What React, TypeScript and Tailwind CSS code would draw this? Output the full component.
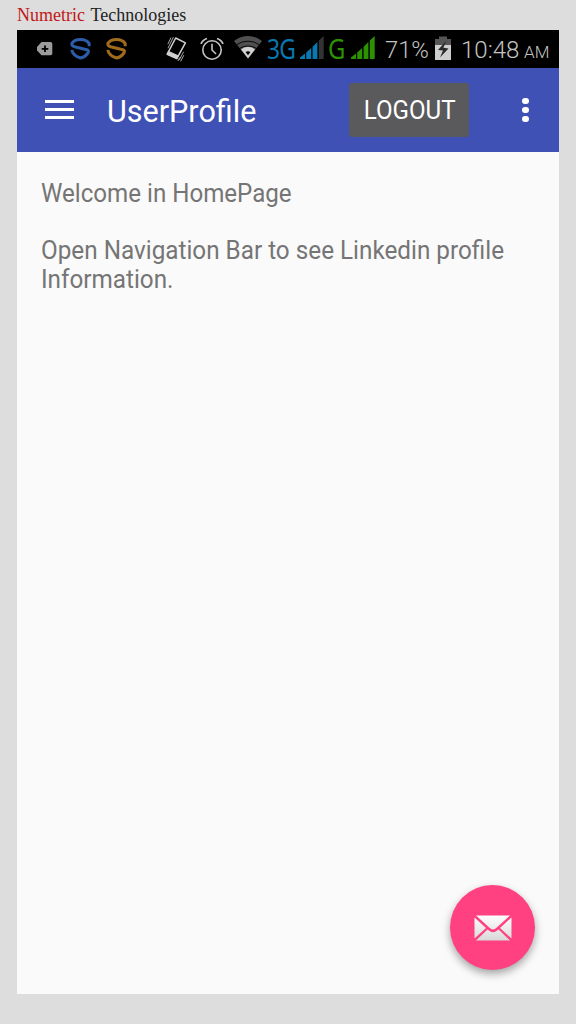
import React from 'react';

function TagIcon() {
  return (
    <svg className="ml-5 h-[38px] w-4 shrink-0" viewBox="37 30 16 38">
      <path d="M41.5 42H50.5Q52.3 42 52.3 44V53.5Q52.3 55.3 50.5 55.3H41.5L37 50.5V47Z" fill="#9b9b9b" />
      <path d="M45 45.5V52M41.7 48.8H48.3" stroke="#000" strokeWidth="1.8" />
    </svg>
  );
}

function SIcon({ color, className }: { color: string; className: string }) {
  return (
    <svg className={`h-[38px] w-[22px] shrink-0 ${className}`} viewBox="0 30 22 38" fill="none" stroke={color} strokeWidth="3">
      <path d="M19.2 46.2V43.6Q16.5 39.6 10.5 39.6Q4.5 39.6 1.9 43.3V44.4Q2 46.1 4.5 46.7L16.8 49.7Q19.4 50.5 18 52.9Q15.5 56.8 10.7 58Q5.5 56.8 3 53Q2.1 51.6 1.9 49.8" />
    </svg>
  );
}

function VibrateIcon() {
  return (
    <svg className="ml-[37px] h-[38px] w-[23px] shrink-0" viewBox="165 30 23 38" fill="none" stroke="#d0d0d0">
      <path d="M175.7 38L185.4 42.8L176.8 58.6L167.2 54.2Z" strokeWidth="1.5" strokeLinejoin="round" />
      <path d="M167.2 54.2L176.8 58.6L178.3 55.8L168.6 51.4Z" fill="#d0d0d0" />
      <path d="M168 48.2L173.4 37.2M167.8 44.2L171 37.6M179.3 60L183.6 51.8M177.8 61L179.8 57.3M180.6 61.4L183.8 55.2" strokeWidth="0.8" />
    </svg>
  );
}

function AlarmIcon() {
  return (
    <svg className="ml-3 h-[38px] w-6 shrink-0" viewBox="200 30 24 38" fill="none" stroke="#c4c4c4">
      <circle cx="212" cy="50" r="9.2" strokeWidth="1.6" />
      <path d="M212 43.8V50L216 54" strokeWidth="1.6" />
      <path d="M201 43.8Q202.5 40 207 38.5M217 38.5Q221.5 40 223 43.8" strokeWidth="1.8" />
    </svg>
  );
}

function WifiIcon() {
  return (
    <svg className="ml-[10px] h-[38px] w-7 shrink-0" viewBox="234 30 28 38" fill="none">
      <path d="M248 58.5L234 41Q240.5 36 248 36T262 41Z" fill="#505050" />
      <path d="M248 58.5L241 49.5Q244 46.8 248 46.8T255 49.5Z" fill="#d2d2d2" />
      <path d="M236.8 44.6Q241.5 41.2 248 41.2T259.2 44.6M240 48.2Q243 46 248 46T256 48.2" stroke="#000" strokeWidth="0.9" />
      <path d="M245.6 52.1Q248 50.6 250.4 52.1L248 55.2Z" fill="#000" />
    </svg>
  );
}

function SignalIcon({ color, last, className }: { color: string; last: string; className: string }) {
  return (
    <svg className={`h-[38px] w-6 shrink-0 ${className}`} viewBox="0 30 24 38" fill={color}>
      <path d="M0 59V57.5L5 53.5V59Z" />
      <path d="M6.2 59V52.5L11.2 48V59Z" />
      <path d="M12.6 59V46.7L17.4 42V59Z" />
      <path d="M18.8 59V40.6L23.7 36V59Z" fill={last} />
    </svg>
  );
}

function BatteryIcon() {
  return (
    <svg className="ml-[6px] h-[38px] w-4 shrink-0" viewBox="435 30 16 38">
      <path d="M435 39H439V36.5H447V39H451V46H435Z" fill="#555" />
      <path d="M435 45H451V60H435Z" fill="#cecece" />
      <path d="M446.2 40.8L438 50L443 50.6L440 57.4L448.5 48.4L443.4 47.7Z" fill="#292929" />
    </svg>
  );
}

function StatusBar() {
  return (
    <div className="flex h-[38px] items-start bg-black font-['Roboto',sans-serif] leading-[38px] whitespace-nowrap text-[#c4c4c4]">
      <TagIcon />
      <SIcon color="#2c5da8" className="ml-[17px]" />
      <SIcon color="#a16b1c" className="ml-[14px]" />
      <VibrateIcon />
      <AlarmIcon />
      <WifiIcon />
      <span className="ml-[5px] w-[29px] shrink-0 origin-left scale-x-[0.86] pt-px font-['Noto_Sans',sans-serif] text-[26.5px] leading-[36px] tracking-[-1px] text-[#0878b0]">3G</span>
      <SignalIcon color="#0878b0" last="#333" className="ml-1" />
      <span className="ml-1 w-[18px] shrink-0 origin-left scale-x-[0.9] pt-px font-['Noto_Sans',sans-serif] text-[26.5px] leading-[36px] text-[#2c9200]">G</span>
      <SignalIcon color="#2c9200" last="#2c9200" className="ml-[5px]" />
      <span className="ml-[10px] w-11 shrink-0 origin-left scale-x-[0.97] pt-px text-[24.5px] font-light">71%</span>
      <BatteryIcon />
      <span className="ml-[10px] w-[62px] shrink-0 origin-left scale-x-[0.98] pt-px text-[24.5px] font-light">10:48</span>
      <span className="ml-px shrink-0 pt-[3px] text-[17px] font-light">AM</span>
    </div>
  );
}

function AppBar() {
  return (
    <header className="flex h-[84px] items-center bg-[#3f51b5] font-['Roboto',sans-serif] text-white">
      <button className="ml-7 flex w-[29px] -translate-y-px flex-col gap-[5px]" aria-label="Menu">
        <span className="h-[3px] w-full bg-white" />
        <span className="h-[3px] w-full bg-white" />
        <span className="h-[3px] w-full bg-white" />
      </button>
      <h1 className="ml-[33px] w-[242px] origin-left scale-x-[0.985] pt-[3px] text-[31px] leading-9 whitespace-nowrap">UserProfile</h1>
      <button className="flex h-[54px] w-[120px] items-center justify-center rounded-[3px] bg-[#5a595b] pt-0.5 pl-0.5 text-[25px] whitespace-nowrap">
        <span className="scale-x-[0.965]">LOGOUT</span>
      </button>
      <button className="ml-[53px] flex w-[7px] flex-col gap-[2.5px]" aria-label="More options">
        <span className="size-[6.5px] rounded-full bg-white" />
        <span className="size-[6.5px] rounded-full bg-white" />
        <span className="size-[6.5px] rounded-full bg-white" />
      </button>
    </header>
  );
}

export default function App() {
  return (
    <div className="flex h-[1024px] w-[576px] flex-col bg-[#dddddd] pl-[17px]">
      <div className="h-[30px] font-['Liberation_Serif',serif] text-[18px] leading-[31px] whitespace-nowrap text-[#222]">
        <span className="text-[#c01818]">Numetric</span> <span className="ml-px">Technologies</span>
      </div>
      <div className="flex h-[964px] w-[542px] flex-col bg-[#fafafa]">
        <StatusBar />
        <AppBar />
        <main className="flex flex-1 flex-col px-6 pt-[27px] pb-[24px] font-['Roboto',sans-serif] text-[25px] leading-[29px] text-[#757575]">
          <p className="origin-left scale-x-[0.965] whitespace-nowrap">Welcome in HomePage</p>
          <p className="mt-7 origin-left scale-x-[0.971] whitespace-nowrap">
            Open Navigation Bar to see Linkedin profile
            <br />
            Information.
          </p>
          <button
            className="mt-auto flex size-[85px] items-center justify-center self-end rounded-full bg-[#ff4081] shadow-[0_4px_9px_rgba(0,0,0,0.35)]"
            aria-label="Send mail"
          >
            <svg className="h-[26px] w-[38px]" viewBox="0 0 38 26">
              <defs>
                <linearGradient id="mail" x1="0" y1="0" x2="0" y2="26" gradientUnits="userSpaceOnUse">
                  <stop offset="0" stopColor="#fff" />
                  <stop offset="1" stopColor="#d8d8d8" />
                </linearGradient>
              </defs>
              <path
                d="M2 0.5H36L22.5 12.8Q19 16 15.5 12.8ZM0.5 2.5L12 13L0.5 23.5ZM37.5 2.5V23.5L26 13ZM2 25.5L13.5 14.5L16 16.3Q19 18 22 16.3L24.5 14.5L36 25.5Z"
                fill="url(#mail)"
              />
            </svg>
          </button>
        </main>
      </div>
    </div>
  );
}
